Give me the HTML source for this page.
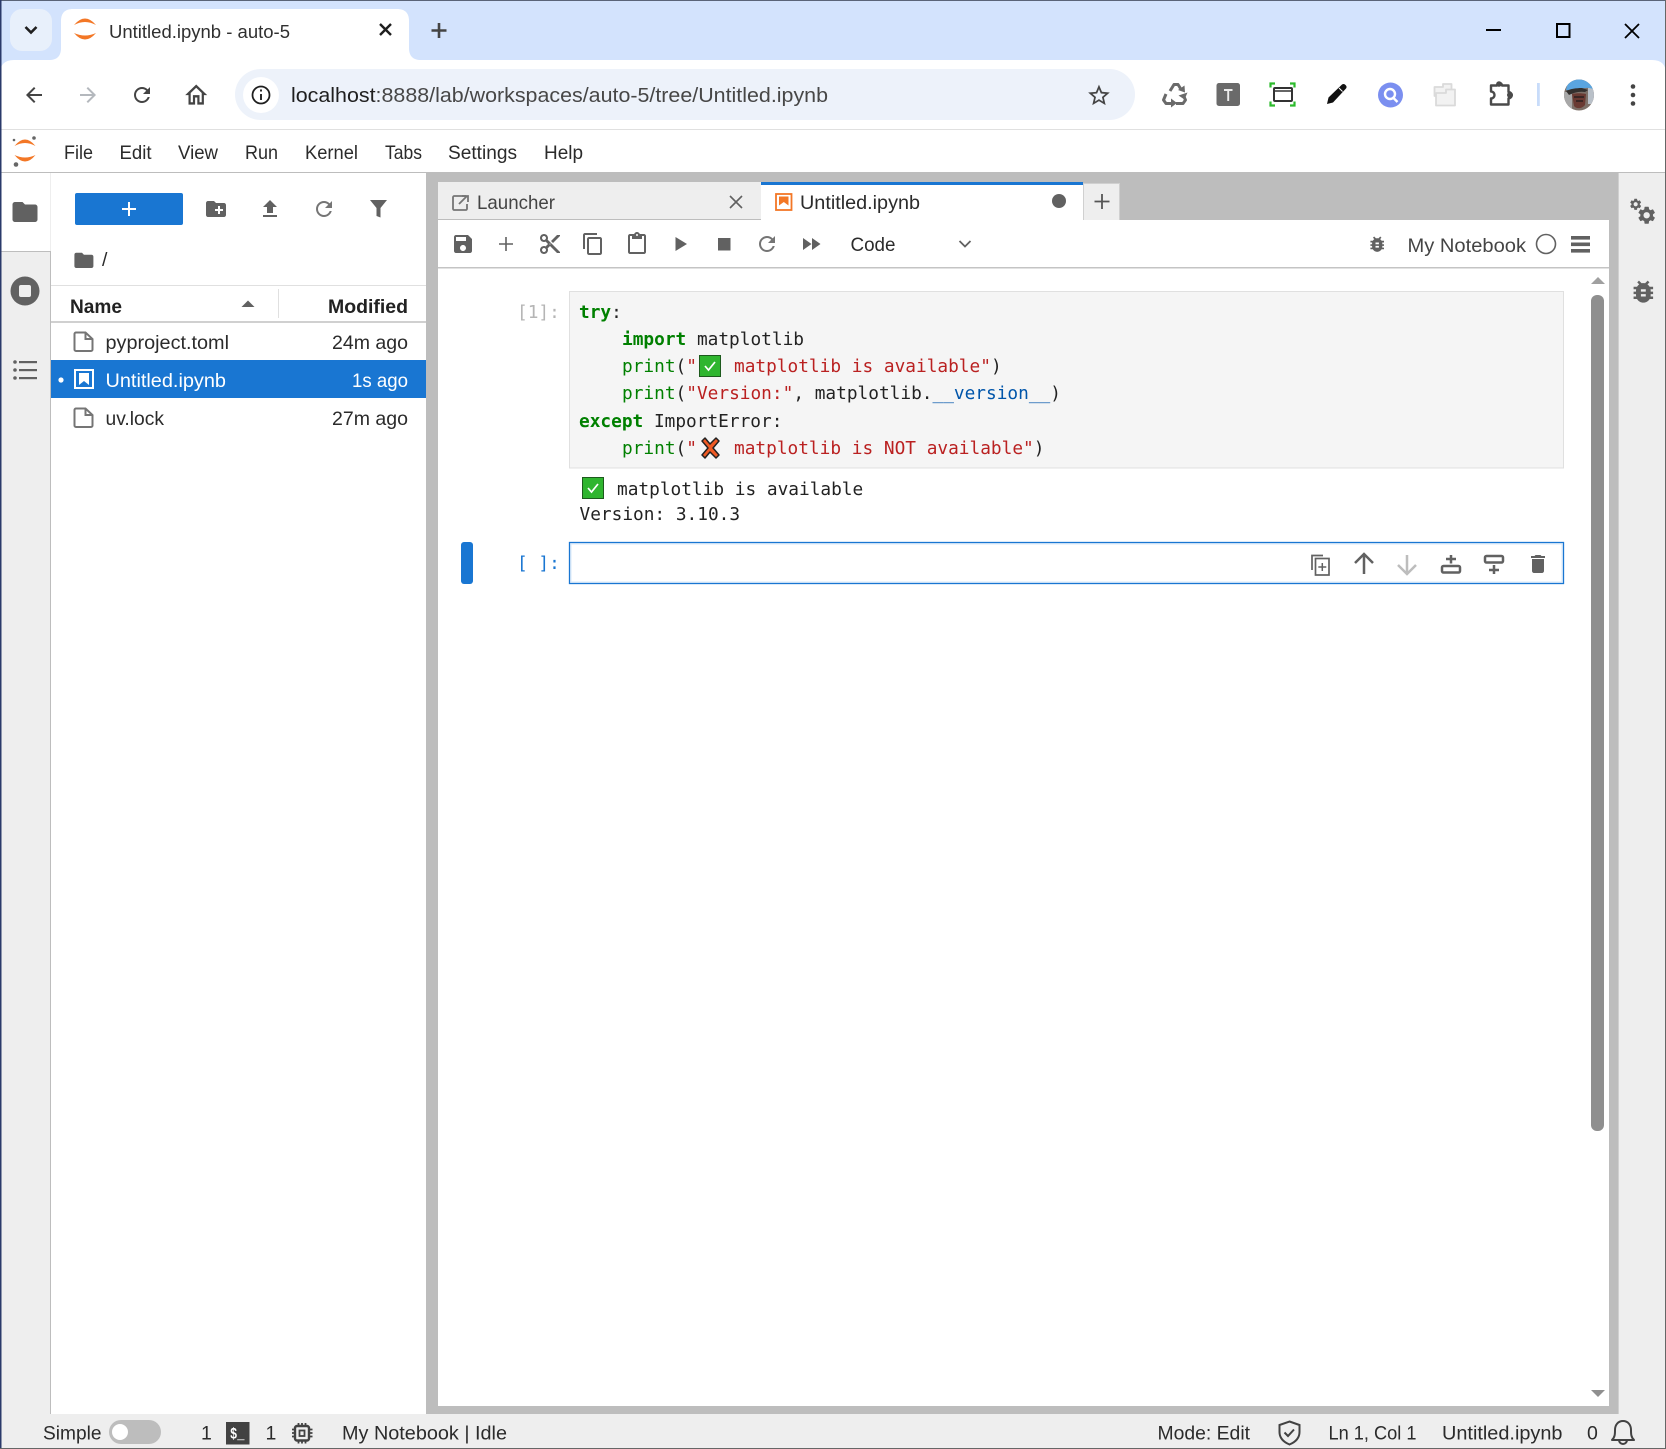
<!DOCTYPE html>
<html><head><meta charset="utf-8"><title>Untitled.ipynb - auto-5</title>
<style>
html,body{margin:0;padding:0;background:#fff;overflow:hidden}
svg{display:block}
text{font-family:"Liberation Sans",sans-serif;font-size:19.5px;fill:#2b2b2b}
.m text,text.m{font-family:"DejaVu Sans Mono","Liberation Mono",monospace;font-size:17.8px;fill:#222;white-space:pre}
.m .k{fill:#008000;font-weight:bold}.m .b{fill:#008000}.m .s{fill:#ba2121}.m .v{fill:#0055aa}
</style></head><body>
<svg width="1666" height="1449" viewBox="0 0 1666 1449" xmlns="http://www.w3.org/2000/svg">
<defs>
<path id="folder" d="M10 4H4c-1.1 0-1.99.9-1.99 2L2 18c0 1.1.9 2 2 2h16c1.100 0 2-.9 2-2V8c0-1.100-.9-2-2-2h-8l-2-2z"/>
<path id="refresh" d="M17.650 6.350C16.200 4.900 14.210 4 12 4c-4.420 0-7.990 3.580-7.990 8s3.570 8 7.990 8c3.730 0 6.840-2.550 7.730-6h-2.080c-.82 2.330-3.040 4-5.650 4-3.310 0-6-2.690-6-6s2.690-6 6-6c1.660 0 3.140.69 4.220 1.780L13 11h7V4l-2.350 2.350z"/>
<path id="bug" d="M20 8h-2.810c-.45-.78-1.070-1.450-1.820-1.960L17 4.410 15.590 3l-2.170 2.170C12.960 5.060 12.490 5 12 5c-.49 0-.96.06-1.410.17L8.410 3 7 4.410l1.620 1.630C7.880 6.550 7.260 7.220 6.810 8H4v2h2.090c-.05.33-.09.66-.09 1v1H4v2h2v1c0 .34.04.67.09 1H4v2h2.810c1.040 1.790 2.970 3 5.190 3s4.150-1.210 5.190-3H20v-2h-2.090c.05-.33.09-.66.09-1v-1h2v-2h-2v-1c0-.34-.04-.67-.09-1H20V8zm-6 8h-4v-2h4v2zm0-4h-4v-2h4v2z"/>
<path id="gear" d="M19.140 12.940c.04-.3.06-.61.06-.94 0-.32-.02-.64-.07-.94l2.030-1.580c.18-.14.23-.41.12-.61l-1.920-3.320c-.12-.22-.37-.29-.59-.22l-2.390.96c-.5-.38-1.030-.7-1.620-.94l-.36-2.540c-.04-.24-.24-.41-.48-.41h-3.840c-.24 0-.43.17-.47.41l-.36 2.540c-.59.24-1.130.57-1.620.94l-2.390-.96c-.22-.08-.47 0-.59.22L2.740 8.870c-.12.21-.08.47.12.61l2.030 1.580c-.05.3-.09.63-.09.94s.02.64.07.94l-2.030 1.580c-.18.14-.23.41-.12.61l1.920 3.320c.12.22.37.29.59.22l2.390-.96c.5.38 1.030.7 1.620.94l.36 2.540c.05.24.24.41.48.41h3.840c.24 0 .44-.17.47-.41l.36-2.540c.59-.24 1.130-.56 1.620-.94l2.390.96c.22.08.47 0 .59-.22l1.920-3.320c.12-.22.07-.47-.12-.61l-2.010-1.580zM12 15.600c-1.980 0-3.600-1.620-3.600-3.600s1.620-3.600 3.600-3.600 3.600 1.620 3.600 3.600-1.620 3.600-3.600 3.600z"/>
<path id="file" d="M2.500 1.500h9.500l7 6.500v10.500a1.500 1.500 0 0 1-1.500 1.500H2.500A1.500 1.500 0 0 1 1 18.500V3a1.500 1.500 0 0 1 1.500-1.500zM12 2v6h6.500"/>
<clipPath id="av"><ellipse cx="1579" cy="95" rx="15" ry="15.500"/></clipPath>
</defs>

<!-- chrome title strip -->
<rect width="1666" height="60" fill="#d3e3fd"/>
<rect x="10" y="9" width="42" height="42" rx="12" fill="#e8f0fb"/>
<path d="M25.500 27l5.500 5.500 5.500-5.500" fill="none" stroke="#1f1f1f" stroke-width="2.600"/>
<path d="M49 60c8 0 12-4 12-12V21c0-8 4-12 12-12H397c8 0 12 4 12 12V48c0 8 4 12 12 12z" fill="#fff"/>
<g fill="#f37726"><path d="M74 25Q85 12 96 25Q85 19 74 25z"/><path d="M74 33Q85 46 96 33Q85 38 74 33z"/></g>
<text x="109" y="38" textLength="181" lengthAdjust="spacingAndGlyphs" style="font-size:18.500px;fill:#303030">Untitled.ipynb - auto-5</text>
<path d="M380 24l11 11m0-11l-11 11" stroke="#1f1f1f" stroke-width="2.400"/>
<path d="M439 23v15m-7.500-7.500h15" stroke="#444" stroke-width="2.600"/>
<path d="M1486 30h15" stroke="#000" stroke-width="2"/>
<rect x="1557" y="24" width="12.500" height="13" fill="none" stroke="#000" stroke-width="2"/>
<path d="M1625 24l14 14m0-14l-14 14" stroke="#000" stroke-width="1.800"/>

<!-- chrome toolbar -->
<rect y="60" width="1666" height="69" fill="#fff"/>
<path d="M0 74q0-14 14-14h-14zM1666 74q0-14-14-14h14z" fill="#d3e3fd"/>
<rect y="129" width="1666" height="1" fill="#e0e0e0"/>
<g transform="translate(22,83)" fill="#444"><path d="M20 11H7.830l5.590-5.590L12 4l-8 8 8 8 1.410-1.410L7.830 13H20v-2z"/></g>
<g transform="translate(76,83)" fill="#b4b8bd"><path d="M4 11h12.170l-5.590-5.590L12 4l8 8-8 8-1.410-1.410L16.170 13H4v-2z"/></g>
<use href="#refresh" transform="translate(130,83)" fill="#444"/>
<g transform="translate(183,81) scale(1.100,1.180)" fill="#444"><path d="M12 5.690l5 4.500V18h-2v-6H9v6H7v-7.810l5-4.500M12 3L2 12h3v8h6v-6h2v6h6v-8h3L12 3z"/></g>
<rect x="235" y="69" width="900" height="51" rx="25.500" fill="#edf2fa"/>
<circle cx="261" cy="95" r="18" fill="#fff"/>
<circle cx="261" cy="95" r="8.500" fill="none" stroke="#1f1f1f" stroke-width="1.800"/>
<path d="M261 94v6M261 89.500v2" stroke="#1f1f1f" stroke-width="1.900"/>
<text x="291" y="102" textLength="537" lengthAdjust="spacingAndGlyphs" style="font-size:20.500px;fill:#474747"><tspan style="fill:#1f1f1f">localhost</tspan>:8888/lab/workspaces/auto-5/tree/Untitled.ipynb</text>
<g transform="translate(1086,82.500) scale(1.080)" fill="#444"><path d="M22 9.240l-7.190-.62L12 2 9.190 8.630 2 9.240l5.460 4.730L5.820 21 12 17.270 18.180 21l-1.630-7.030L22 9.240zM12 15.400l-3.760 2.270 1-4.280-3.320-2.880 4.380-.38L12 6.100l1.710 4.040 4.380.38-3.320 2.880 1 4.280L12 15.400z"/></g>
<!-- extensions -->
<g fill="none" stroke="#6a6a6a" stroke-width="3" stroke-linejoin="round">
<path d="M1170 91l4-6.500h4l2.500 4"/>
<path d="M1166 94l-2.500 6 2.500 3.500h6"/>
<path d="M1176 103.500h7l2.500-3.500-2.500-5.500"/>
</g>
<path d="M1178 90.500l6.500-4.500.5 7zM1171 99v9l6-4.500zM1178.500 96l9-3-3 7z" fill="#6a6a6a" transform="translate(0,-.5)"/>
<rect x="1216.500" y="83" width="23.500" height="23" rx="2.500" fill="#6a6a6a"/>
<path d="M1224 90h8.500M1228.200 90v11" stroke="#ececec" stroke-width="1.900"/>
<path d="M1270.500 87.500v-4h4.500M1290 83.500h4.500v4M1270.500 101.500v4h4.500M1294.500 101.500v4h-4.500" fill="none" stroke="#2dbb2d" stroke-width="2.200"/>
<rect x="1274" y="88" width="18" height="13" rx="1" fill="#fff" stroke="#333" stroke-width="2"/><path d="M1274 91h18" stroke="#333" stroke-width="1.600"/>
<path d="M1327 104l1.500-6.500L1342 84.500c1.500-1 2.500-.5 3.500.5s1.500 2 .5 3.500L1333 102.500z" fill="#111"/><path d="M1339 88l3.500 3.500" stroke="#fff" stroke-width="1"/>
<circle cx="1390.500" cy="95" r="12.500" fill="#7b8ff0"/>
<circle cx="1390" cy="94" r="5" fill="none" stroke="#fff" stroke-width="2.400"/><path d="M1393.500 98l4 4" stroke="#fff" stroke-width="2.400"/>
<g fill="#f2f2f2" stroke="#dadada" stroke-width="1.800" stroke-linejoin="round"><path d="M1443 84h8.500v12h-17v-9h8.500z"/><path d="M1436 93h10v-3.500h9V105.500h-19z"/></g>
<path d="M1491 85.500H1497a2.500 2.500 0 0 1 5 0H1508.500V92a3.200 3.200 0 0 1 0 6.400V104.500H1491V98.500a3.500 3.500 0 0 0 0-7z" fill="none" stroke="#4a4a4a" stroke-width="2.400" stroke-linejoin="round"/>
<circle cx="1499" cy="84" r="2.800" fill="#4a4a4a"/><circle cx="1510" cy="95" r="3" fill="#4a4a4a"/>
<rect x="1537" y="83" width="2.800" height="23" fill="#c8dcfa"/>
<g clip-path="url(#av)">
<rect x="1564" y="79" width="30" height="32" fill="#7d7068"/>
<rect x="1564" y="92" width="8" height="18" fill="#a8a8a8"/>
<rect x="1588" y="88" width="6" height="16" fill="#b9c0c8"/>
<path d="M1566 90c1-8 7-11 13-11s12 2 14 10c-5-2-9-1-14 0s-9 2-13 1z" fill="#5aa5e0"/>
<path d="M1566 91c4-2 10-3 16-3l6 2-3 2c-6-1-12 1-16 3z" fill="#33302e"/>
<path d="M1572 94c4-1 10-1 14 0l-1 11c-3 4-9 4-11 1z" fill="#6a3a32"/>
<path d="M1574 97h10M1576 101h7" stroke="#2a2020" stroke-width="1.500"/>
</g>
<g fill="#444"><circle cx="1633" cy="86.500" r="2.300"/><circle cx="1633" cy="95" r="2.300"/><circle cx="1633" cy="103.500" r="2.300"/></g>

<!-- jupyter menu bar -->
<rect y="130" width="1666" height="42" fill="#fff"/>
<rect y="172" width="1666" height="1" fill="#bdbdbd"/>
<g fill="#f37726"><path d="M14.500 146Q25 133 35.500 146Q25 140 14.500 146z"/><path d="M14.500 155Q25 168 35.500 155Q25 160 14.500 155z"/></g>
<g fill="#666"><circle cx="34" cy="138" r="1.800"/><circle cx="14" cy="140" r="1.300"/><circle cx="16" cy="164.500" r="2.300"/></g>
<text x="64" y="159" textLength="29" lengthAdjust="spacingAndGlyphs">File</text>
<text x="119.500" y="159" textLength="32" lengthAdjust="spacingAndGlyphs">Edit</text>
<text x="178" y="159" textLength="40" lengthAdjust="spacingAndGlyphs">View</text>
<text x="245" y="159" textLength="33" lengthAdjust="spacingAndGlyphs">Run</text>
<text x="305" y="159" textLength="53" lengthAdjust="spacingAndGlyphs">Kernel</text>
<text x="385" y="159" textLength="37" lengthAdjust="spacingAndGlyphs">Tabs</text>
<text x="448" y="159" textLength="69" lengthAdjust="spacingAndGlyphs">Settings</text>
<text x="544" y="159" textLength="39" lengthAdjust="spacingAndGlyphs">Help</text>

<!-- left sidebar -->
<rect x="0" y="173" width="51" height="1241" fill="#eeeeee"/>
<rect x="0" y="173" width="50" height="78" fill="#fff"/>
<rect x="0" y="251" width="50" height="1" fill="#bdbdbd"/>
<rect x="50" y="251" width="1" height="1163" fill="#bdbdbd"/>
<use href="#folder" transform="translate(10,197) scale(1.250)" fill="#616161"/>
<circle cx="25" cy="291" r="14.500" fill="#616161"/><rect x="19" y="285" width="12" height="12" rx="2" fill="#eee"/>
<g fill="#616161"><rect x="19" y="361" width="18" height="2.200"/><rect x="19" y="369" width="18" height="2.200"/><rect x="19" y="377" width="18" height="2.200"/><circle cx="15" cy="362" r="1.800"/><circle cx="15" cy="370" r="1.800"/><circle cx="15" cy="378" r="1.800"/></g>

<!-- file browser -->
<rect x="51" y="173" width="375" height="1241" fill="#fff"/>
<rect x="75" y="193" width="108" height="32" rx="2" fill="#1976d2"/>
<path d="M129 202v14m-7-7h14" stroke="#fff" stroke-width="2"/>
<g transform="translate(204,197)" fill="#616161"><path d="M20 6h-8l-2-2H4c-1.110 0-1.990.89-1.990 2L2 18c0 1.110.89 2 2 2h16c1.110 0 2-.89 2-2V8c0-1.110-.89-2-2-2zm-1 8h-3v3h-2v-3h-3v-2h3V9h2v3h3v2z"/></g>
<g transform="translate(258,197)" fill="#616161"><path d="M9 16h6v-6h4l-7-7-7 7h4zm-4 2h14v2H5z"/></g>
<use href="#refresh" transform="translate(312,197)" fill="#757575"/>
<path d="M370 200h17l-6.500 8v9.500l-4 -1.500v-8z" fill="#616161"/>
<use href="#folder" transform="translate(72.500,249) scale(.95)" fill="#616161"/>
<text x="102" y="266" style="font-size:19.500px">/</text>
<rect x="51" y="285" width="375" height="1" fill="#e0e0e0"/>
<rect x="51" y="321" width="375" height="2" fill="#d0d0d0"/>
<rect x="278" y="289" width="1" height="29" fill="#e0e0e0"/>
<text x="70" y="313" textLength="52" lengthAdjust="spacingAndGlyphs" style="font-weight:bold;font-size:19px;fill:#222">Name</text>
<text x="328" y="313" textLength="80" lengthAdjust="spacingAndGlyphs" style="font-weight:bold;font-size:19px;fill:#222">Modified</text>
<path d="M241.500 307l6.500-6.500 6.500 6.500z" fill="#616161"/>
<use href="#file" transform="translate(73.500,331)" fill="none" stroke="#757575" stroke-width="2"/>
<text x="105.500" y="349" textLength="123.500" lengthAdjust="spacingAndGlyphs">pyproject.toml</text>
<text x="332" y="349" textLength="76" lengthAdjust="spacingAndGlyphs">24m ago</text>
<rect x="51" y="360" width="375" height="38" fill="#1976d2"/>
<circle cx="61" cy="380" r="2.600" fill="#fff"/>
<rect x="75" y="370" width="18" height="18" fill="none" stroke="#fff" stroke-width="2"/>
<path d="M79 373h10v12l-5-4-5 4z" fill="#fff"/>
<text x="105.500" y="387" textLength="120.500" lengthAdjust="spacingAndGlyphs" style="fill:#fff">Untitled.ipynb</text>
<text x="352" y="387" textLength="56" lengthAdjust="spacingAndGlyphs" style="fill:#fff">1s ago</text>
<use href="#file" transform="translate(73.500,407)" fill="none" stroke="#757575" stroke-width="2"/>
<text x="105.500" y="425" textLength="58.500" lengthAdjust="spacingAndGlyphs">uv.lock</text>
<text x="332" y="425" textLength="76" lengthAdjust="spacingAndGlyphs">27m ago</text>

<!-- dock -->
<rect x="426" y="173" width="1192" height="1241" fill="#bdbdbd"/>
<rect x="438" y="182" width="323" height="38" fill="#eeeeee"/>
<rect x="438" y="219" width="323" height="1" fill="#bdbdbd"/>
<rect x="761" y="182" width="322" height="39" fill="#fff"/>
<rect x="761" y="182" width="322" height="3" fill="#1976d2"/>
<rect x="1083.500" y="183.500" width="36" height="37" fill="#eeeeee" stroke="#d0d0d0"/>
<path d="M1102 194v15m-7.500-7.500h15" stroke="#555" stroke-width="1.800"/>
<path d="M466 196h-12a1.500 1.500 0 0 0-1 1v12a1.500 1.500 0 0 0 1 1h12a1.500 1.500 0 0 0 1-1v-5" fill="none" stroke="#757575" stroke-width="1.800"/>
<path d="M459 204l8-8m-5 0h6v6" fill="none" stroke="#757575" stroke-width="1.800"/>
<text x="477" y="209" textLength="78" lengthAdjust="spacingAndGlyphs" style="fill:#444">Launcher</text>
<path d="M730 196l12 12m0-12l-12 12" stroke="#616161" stroke-width="1.600"/>
<rect x="776" y="194" width="15.500" height="16" fill="#fff" stroke="#f37726" stroke-width="1.800"/>
<path d="M779 196.500h9.500v9l-4.700-3.500-4.800 3.500z" fill="#f37726"/>
<text x="800" y="209" textLength="120" lengthAdjust="spacingAndGlyphs">Untitled.ipynb</text>
<circle cx="1059" cy="201" r="7" fill="#616161"/>

<!-- notebook main -->
<rect x="438" y="220" width="1171" height="1186" fill="#fff"/>
<rect x="438" y="267" width="1171" height="1.500" fill="#c4c4c4"/>
<g transform="translate(451,232)" fill="#616161"><path d="M17 3H5c-1.110 0-2 .9-2 2v14c0 1.100.89 2 2 2h14c1.100 0 2-.9 2-2V7l-4-4zm-5 16c-1.660 0-3-1.340-3-3s1.340-3 3-3 3 1.340 3 3-1.340 3-3 3zm3-10H5V5h10v4z"/></g>
<g transform="translate(494,232)" fill="#616161"><path d="M19 12.800h-6.200V19h-1.600v-6.200H5v-1.600h6.200V5h1.600v6.200H19z"/></g>
<g transform="translate(538,232)" fill="#616161"><path d="M9.640 7.640c.23-.5.36-1.050.36-1.640 0-2.210-1.790-4-4-4S2 3.790 2 6s1.790 4 4 4c.59 0 1.140-.13 1.640-.36L10 12l-2.360 2.360C7.140 14.130 6.590 14 6 14c-2.210 0-4 1.790-4 4s1.790 4 4 4 4-1.790 4-4c0-.59-.13-1.140-.36-1.640L12 14l7 7h3v-1L9.640 7.640zM6 8c-1.100 0-2-.89-2-2s.9-2 2-2 2 .89 2 2-.9 2-2 2zm0 12c-1.100 0-2-.89-2-2s.9-2 2-2 2 .89 2 2-.9 2-2 2zm6-7.500c-.28 0-.5-.22-.5-.5s.22-.5.5-.5.5.22.5.5-.22.5-.5.5zM19 3l-6 6 2 2 7-7V3z"/></g>
<g transform="translate(581,232)" fill="#616161"><path d="M16 1H4c-1.100 0-2 .9-2 2v14h2V3h12V1zm3 4H8c-1.100 0-2 .9-2 2v14c0 1.100.9 2 2 2h11c1.100 0 2-.9 2-2V7c0-1.100-.9-2-2-2zm0 16H8V7h11v14z"/></g>
<g transform="translate(625,232)" fill="#616161"><path d="M19 2h-4.180C14.400.84 13.300 0 12 0c-1.300 0-2.400.84-2.820 2H5c-1.100 0-2 .9-2 2v16c0 1.100.9 2 2 2h14c1.100 0 2-.9 2-2V4c0-1.100-.9-2-2-2zm-7 0c.55 0 1 .45 1 1s-.45 1-1 1-1-.45-1-1 .45-1 1-1zm7 18H5V4h2v3h10V4h2v16z"/></g>
<path d="M675.500 237v14l11.500-7z" fill="#616161"/>
<rect x="718" y="238" width="12.500" height="12.500" fill="#616161"/>
<use href="#refresh" transform="translate(755,232)" fill="#757575"/>
<g transform="translate(799,232)" fill="#616161"><path d="M4 18l8.500-6L4 6v12zm9-12v12l8.500-6L13 6z"/></g>
<text x="850.500" y="251" textLength="45" lengthAdjust="spacingAndGlyphs">Code</text>
<path d="M959.500 241l5.500 5.500 5.500-5.500" fill="none" stroke="#616161" stroke-width="1.800"/>
<use href="#bug" transform="translate(1367,234) scale(.85)" fill="#616161"/>
<text x="1407.500" y="252" textLength="118.500" lengthAdjust="spacingAndGlyphs" style="fill:#444">My Notebook</text>
<circle cx="1546" cy="244" r="9.500" fill="none" stroke="#616161" stroke-width="1.600"/>
<rect x="1571" y="236" width="19" height="3.600" fill="#616161"/><rect x="1571" y="242.500" width="19" height="3.600" fill="#616161"/><rect x="1571" y="249" width="19" height="3.600" fill="#616161"/>

<!-- code cell -->
<text class="m" x="517" y="318" style="fill:#b5b5b5">[1]:</text>
<rect x="569.500" y="291.500" width="994" height="176.500" fill="#f5f5f5" stroke="#e0e0e0"/>
<g class="m">
<text x="579" y="318"><tspan class="k">try</tspan>:</text>
<text x="622" y="345"><tspan class="k">import</tspan> matplotlib</text>
<text x="622" y="372"><tspan class="b">print</tspan>(<tspan class="s">"</tspan></text>
<text x="734" y="372"><tspan class="s">matplotlib is available"</tspan>)</text>
<text x="622" y="399"><tspan class="b">print</tspan>(<tspan class="s">"Version:"</tspan>, matplotlib.<tspan class="v">__version__</tspan>)</text>
<text x="579" y="427"><tspan class="k">except</tspan> ImportError:</text>
<text x="622" y="454"><tspan class="b">print</tspan>(<tspan class="s">"</tspan></text>
<text x="734" y="454"><tspan class="s">matplotlib is NOT available"</tspan>)</text>
<text x="617" y="495">matplotlib is available</text>
<text x="579.500" y="520">Version: 3.10.3</text>
</g>
<!-- emoji -->
<rect x="699.500" y="355.500" width="21" height="21" fill="#2fb52f" stroke="#1d5a1d"/>
<path d="M705 366l3.500 4 6.500-8" fill="none" stroke="#fff" stroke-width="1.700"/>
<path d="M702 441l3-3 5 6 6-6 3 3-6 7 6 7-3 3-6-6-5 6-3-3 6-7z" fill="#ef5a24" stroke="#222" stroke-width="1.500" stroke-linejoin="round"/>
<rect x="582.500" y="477.500" width="21" height="21" fill="#2fb52f" stroke="#1d5a1d"/>
<path d="M588 488l3.500 4 6.500-8" fill="none" stroke="#fff" stroke-width="1.700"/>

<!-- active cell -->
<rect x="461" y="542" width="12" height="42" rx="3" fill="#1976d2"/>
<text class="m" x="517" y="569" style="fill:#1976d2">[ ]:</text>
<rect x="569.500" y="542.500" width="994" height="41" fill="#fff" stroke="#1976d2" stroke-width="1.300"/>
<rect x="571" y="544" width="991" height="38" fill="none" stroke="#d8e8f8" stroke-width="1"/>
<g fill="none" stroke="#616161" stroke-width="1.700">
<path d="M1312 570v-14.500h11"/><rect x="1315.500" y="558.500" width="13.500" height="16.500"/><path d="M1322.300 563v8m-4-4h8" stroke-width="1.500"/>
<path d="M1355 563l9-9 9 9M1364 555v19" stroke-width="2.500"/>
<path d="M1398 565l9 9 9-9M1407 555v19" stroke="#bdbdbd" stroke-width="2.500"/>
<rect x="1442" y="566" width="18" height="6.500" rx="1.500" stroke-width="2.500"/><path d="M1451 555v8.500m-5-4.500h10" stroke-width="2.500"/>
<rect x="1485" y="556" width="18" height="6.500" rx="1.500" stroke-width="2.500"/><path d="M1494 565v9m-5-4h10" stroke-width="2.500"/>
</g>
<g transform="translate(1526,552)" fill="#616161"><path d="M6 19c0 1.100.9 2 2 2h8c1.100 0 2-.9 2-2V7H6v12zM19 4h-3.500l-1-1h-5l-1 1H5v2h14V4z"/></g>

<!-- scrollbar -->
<path d="M1591 284l7-7 7 7z" fill="#8f8f8f" opacity=".85"/>
<rect x="1591" y="295" width="13" height="836" rx="6" fill="#8f8f8f"/>
<path d="M1591 1390l7 7 7-7z" fill="#8f8f8f"/>

<!-- right sidebar -->
<rect x="1618" y="173" width="48" height="1241" fill="#eeeeee"/>
<rect x="1618" y="173" width="1" height="1241" fill="#d0d0d0"/>
<use href="#gear" transform="translate(1628.700,197.300) scale(.58)" fill="#616161"/>
<use href="#gear" transform="translate(1636.100,204.700) scale(.88)" fill="#616161"/>
<use href="#bug" transform="translate(1628.700,277) scale(1.220)" fill="#616161"/>

<!-- status bar -->
<rect y="1414" width="1666" height="35" fill="#eeeeee"/>
<text x="43" y="1439.700" textLength="58.500" lengthAdjust="spacingAndGlyphs">Simple</text>
<rect x="109" y="1420" width="52" height="24" rx="12" fill="#bdbdbd"/>
<circle cx="120" cy="1432" r="8" fill="#fff"/>
<text x="201" y="1439.700">1</text>
<rect x="226" y="1422" width="23.500" height="22.500" fill="#424242"/>
<text x="230" y="1438.500" textLength="14.500" lengthAdjust="spacingAndGlyphs" style="font-size:15.500px;font-weight:bold;fill:#fff;font-family:'Liberation Mono',monospace">$_</text>
<text x="265.500" y="1439.700">1</text>
<g fill="none" stroke="#424242" stroke-width="2.400"><rect x="295" y="1426" width="14" height="14.500" rx="2"/><path d="M298.500 1423v2.500m3.500-2.500v2.500m3.500-2.500v2.500M298.500 1441v2.500m3.500-2.500v2.500m3.500-2.500v2.500M292 1429.500h2.500m-2.500 3.500h2.500m-2.500 3.500h2.500M310 1429.500h2.500m-2.500 3.500h2.500m-2.500 3.500h2.500" stroke-width="1.800"/></g>
<rect x="299.500" y="1430.500" width="5" height="5.500" fill="none" stroke="#424242" stroke-width="1.800"/>
<text x="342" y="1439.700" textLength="165" lengthAdjust="spacingAndGlyphs">My Notebook | Idle</text>
<text x="1157.500" y="1439.700" textLength="92.500" lengthAdjust="spacingAndGlyphs">Mode: Edit</text>
<path d="M1289.500 1421.500l10 3.500v7c0 6-4 10-10 12.500-6-2.500-10-6.500-10-12.500v-7z" fill="none" stroke="#424242" stroke-width="2"/>
<path d="M1284.500 1432.500l3.500 3.500 6-6.500" fill="none" stroke="#424242" stroke-width="2"/>
<text x="1328.500" y="1439.700" textLength="88" lengthAdjust="spacingAndGlyphs">Ln 1, Col 1</text>
<text x="1442" y="1439.700" textLength="120.500" lengthAdjust="spacingAndGlyphs">Untitled.ipynb</text>
<text x="1587" y="1439.700">0</text>
<path d="M1612 1440c3-3 3-6 3-10 0-5 3-9 8-9s8 4 8 9c0 4 0 7 3 10zM1619 1440a4 4 0 0 0 8 0" fill="none" stroke="#424242" stroke-width="2" stroke-linejoin="round"/>

<!-- window frame -->
<rect width="1666" height="1" fill="#5a6478"/>
<rect width="1.500" height="1449" fill="#2a3a6a"/>
<rect x="1665" y="0" width="1" height="1449" fill="#666"/>
<rect y="1448" width="1666" height="1" fill="#666"/>
</svg>
</body></html>
